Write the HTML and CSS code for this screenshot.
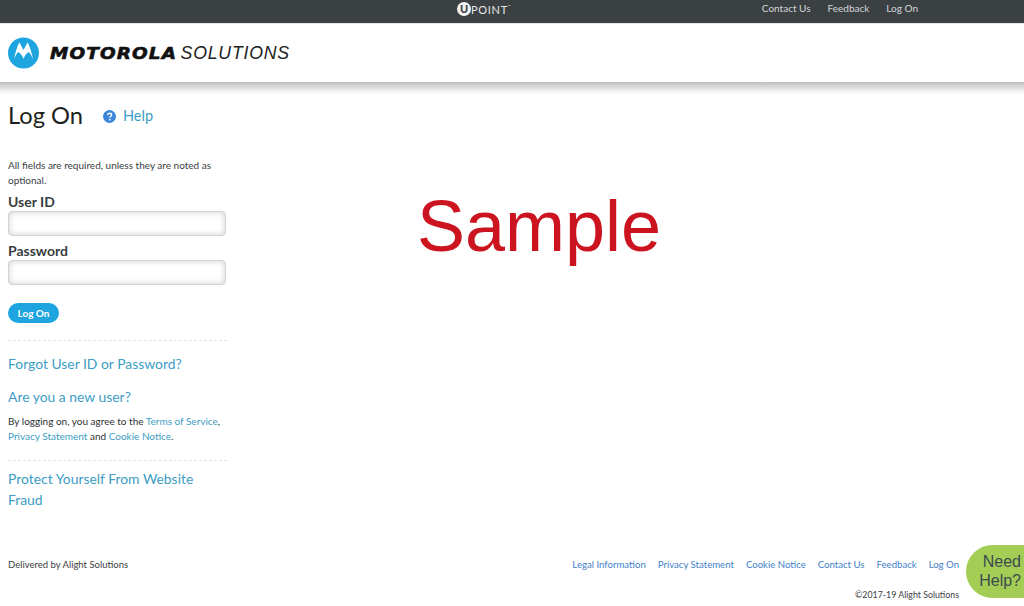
FILE: index.html
```html
<!DOCTYPE html>
<html lang="en">
<head>
  <meta charset="UTF-8" />
  <title>Log On</title>
  <link rel="stylesheet" href="styles.css">
</head>
<body>
  <div class="topbar">
    <div class="upoint"><span class="upoint-u">U</span><span class="upoint-text">POINT</span><span class="upoint-tm">™</span></div>
    <nav class="toplinks">
      <a href="#">Contact Us</a>
      <a href="#">Feedback</a>
      <a href="#">Log On</a>
    </nav>
  </div>

  <header class="brand">
    <svg class="batwing" width="31" height="32" viewBox="0 0 32 32">
      <circle cx="16" cy="16" r="16" fill="#1ea5e0"/>
      <path d="M6 23 C7.500 16 9.500 9 11.700 5 L16 13 L20.300 5 C22.500 9 24.500 16 26 23 C24.800 19.500 23.300 16.500 21.200 15 C19 16.500 17.200 19 16 22 C14.800 19 13 16.500 10.800 15 C8.700 16.500 7.200 19.500 6 23 Z" fill="#fff"/>
    </svg>
    <span class="brand-bold">MOTOROLA</span>
    <span class="brand-light">SOLUTIONS</span>
  </header>
  <div class="brand-shadow"></div>

  <main class="content">
    <section class="logon">
      <div class="title-row">
        <h1>Log On</h1>
        <svg class="help-icon" width="13" height="13" viewBox="0 0 13 13">
          <circle cx="6.500" cy="6.500" r="6.500" fill="#3b87dc"/>
          <path d="M4.500 5.100 C4.600 3.900 5.400 3.200 6.600 3.200 C7.800 3.200 8.600 3.900 8.600 4.900 C8.600 6.200 6.900 6.200 6.800 7.700" fill="none" stroke="#fff" stroke-width="1.400"/>
          <circle cx="6.750" cy="9.700" r="0.900" fill="#fff"/>
        </svg>
        <a class="help-link" href="#">Help</a>
      </div>

      <p class="note">All fields are required, unless they are noted as optional.</p>

      <form class="logon-form">
        <label for="userid">User ID</label>
        <input id="userid" type="text" />
        <label class="label-pass" for="password">Password</label>
        <input id="password" type="password" />
        <button type="button">Log On</button>
      </form>

      <div class="links first">
        <a class="big-link" href="#">Forgot User ID or Password?</a>
        <a class="big-link new-user" href="#">Are you a new user?</a>
        <p class="terms">By logging on, you agree to the <a href="#">Terms of Service</a>, <a href="#">Privacy Statement</a> and <a href="#">Cookie Notice</a>.</p>
      </div>

      <div class="links second">
        <a class="big-link fraud" href="#">Protect Yourself From Website Fraud</a>
      </div>
    </section>
  </main>

  <div class="sample">Sample</div>

  <footer class="footer">
    <div class="footer-row">
      <span class="delivered">Delivered by Alight Solutions</span>
      <nav class="footlinks">
        <a href="#">Legal Information</a>
        <a href="#">Privacy Statement</a>
        <a href="#">Cookie Notice</a>
        <a href="#">Contact Us</a>
        <a href="#">Feedback</a>
        <a href="#">Log On</a>
      </nav>
    </div>
    <div class="copyright">©2017-19 Alight Solutions</div>
  </footer>

  <a class="need-help" href="#">Need<br>Help?</a>
</body>
</html>
```

FILE: styles.css
```css
html, body {
  height: 100%;
}
body {
  margin: 0;
  height: 606px;
  overflow: hidden;
  position: relative;
  display: flex;
  flex-direction: column;
  font-family: 'Lato', sans-serif;
  color: #2e3133;
  background: #fff;
}
a {
  text-decoration: none;
}

.topbar {
  height: 23px;
  flex: none;
  background: #3b4043;
  position: relative;
  display: flex;
  justify-content: flex-end;
  padding-right: 106px;
}
.toplinks {
  display: flex;
  gap: 17px;
  height: 16px;
  align-items: center;
}
.toplinks a {
  color: #d4d6d7;
  font-size: 10px;
}
.upoint {
  position: absolute;
  left: 457px;
  top: 2px;
  display: flex;
  align-items: center;
  color: #e6e7e8;
}
.upoint-u {
  width: 14px;
  height: 14px;
  border-radius: 50%;
  background: #f2f2f2;
  color: #3b4043;
  font-size: 11px;
  font-weight: 900;
  line-height: 14px;
  text-align: center;
}
.upoint-text {
  font-size: 11px;
  letter-spacing: 0.700px;
}
.upoint-tm {
  font-size: 3px;
  margin-bottom: 6px;
}

.brand {
  height: 59px;
  flex: none;
  display: flex;
  align-items: center;
  padding-left: 8px;
  background: #fff;
  border-top: 1px solid #e4e4e4;
  box-sizing: border-box;
}
.batwing {
  margin-right: 11px;
}
.brand-bold {
  font-family: 'DejaVu Sans', sans-serif;
  font-weight: bold;
  font-style: italic;
  font-size: 16px;
  color: #111;
  letter-spacing: 1px;
  margin-right: 20px;
  -webkit-text-stroke: 0.600px #111;
  transform: scaleX(1.150);
  transform-origin: left center;
}
.brand-light {
  font-family: 'Liberation Sans', sans-serif;
  font-style: italic;
  font-size: 17.700px;
  color: #222;
  letter-spacing: 0.800px;
}
.brand-shadow {
  height: 13px;
  flex: none;
  background: linear-gradient(#bdbdbd, #f4f4f4 75%, #fff);
}

.content {
  flex: 1;
  padding: 0 8px;
}
.logon {
  width: 219px;
}
.title-row {
  display: flex;
  align-items: center;
  height: 39px;
}
h1 {
  margin: 0 20px 0 0;
  font-size: 23.700px;
  font-weight: 400;
  color: #1d1f20;
}
.help-icon {
  margin-right: 7px;
  margin-top: 3px;
}
.help-link {
  color: #3d9dc4;
  font-size: 14.500px;
  margin-top: 2px;
}
.note {
  margin: 24px 0 0;
  font-size: 10px;
  line-height: 15px;
  color: #3a3d3f;
}
.logon-form {
  display: flex;
  flex-direction: column;
  align-items: flex-start;
}
.logon-form label {
  font-size: 14px;
  font-weight: 700;
  line-height: 18px;
  margin-top: 5px;
  color: #3a3d3f;
}
.logon-form .label-pass {
  margin-top: 6px;
}
.logon-form input {
  box-sizing: border-box;
  width: 218px;
  height: 25px;
  border: 1px solid #d4d4d4;
  border-radius: 4px;
  margin: 0;
  background: #fff;
  box-shadow: inset 0 0 6px rgba(0, 0, 0, 0.2);
}
.logon-form button {
  margin-top: 18px;
  width: 51px;
  height: 20px;
  border: none;
  border-radius: 10px;
  background: #1ea5e0;
  color: #fff;
  font-family: 'Lato', sans-serif;
  font-size: 10px;
  font-weight: 700;
  padding: 0;
}

.links {
  border-top: 1px dashed #e2e2e2;
}
.links.first {
  margin-top: 17px;
  padding-top: 13px;
}
.links.second {
  margin-top: 16px;
  padding-top: 7px;
}
.big-link {
  display: block;
  color: #3d9dc4;
  font-size: 13.900px;
  line-height: 20px;
}
.new-user {
  margin-top: 13px;
}
.terms {
  margin: 7px 0 0;
  font-size: 10px;
  line-height: 15px;
  color: #2e3133;
}
.terms a {
  color: #3d9dc4;
}
.fraud {
  line-height: 21px;
}

.sample {
  position: absolute;
  left: 417px;
  top: 183px;
  font-family: 'Liberation Sans', sans-serif;
  font-size: 72px;
  line-height: 86px;
  color: #cc1421;
}

.footer {
  flex: none;
  padding: 0 65px 6px 8px;
  font-size: 9.500px;
}
.footer-row {
  display: flex;
  justify-content: space-between;
  align-items: center;
}
.delivered {
  color: #3a3d3f;
}
.footlinks {
  display: flex;
  gap: 12px;
  font-size: 9.600px;
}
.footlinks a {
  color: #3f7fc9;
}
.copyright {
  margin-top: 19px;
  text-align: right;
  font-size: 8.800px;
  color: #3a3d3f;
}

.need-help {
  position: absolute;
  right: 0;
  top: 545px;
  width: 58px;
  height: 53px;
  box-sizing: border-box;
  padding-top: 7px;
  border-radius: 27px 0 0 27px;
  background: #a4cd55;
  color: #3b4a50;
  font-family: 'Liberation Sans', sans-serif;
  font-size: 16px;
  line-height: 19px;
  text-align: right;
  padding-right: 3px;
}
```
